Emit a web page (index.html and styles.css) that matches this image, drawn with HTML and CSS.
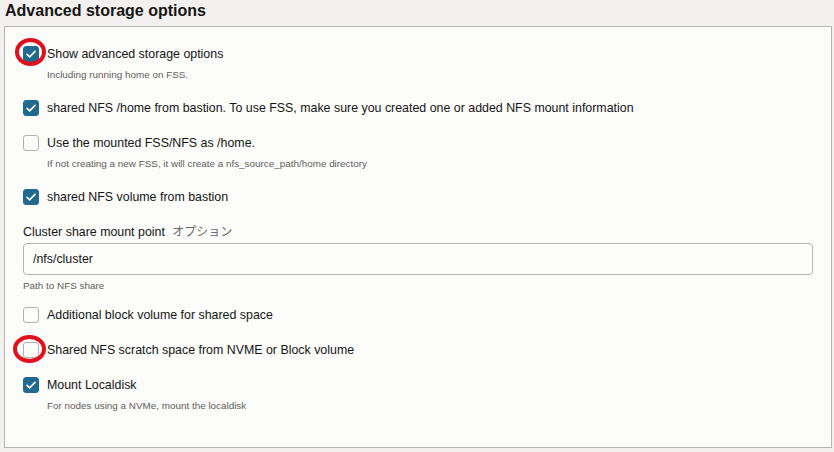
FILE: index.html
```html
<!DOCTYPE html>
<html lang="en">
<head>
<meta charset="utf-8">
<title>Advanced storage options</title>
<link rel="stylesheet" href="styles.css">
</head>
<body>
<h2 class="title">Advanced storage options</h2>
<div class="panel">
  <div class="field has-help">
    <div class="row">
      <span class="cb checked"><svg viewBox="0 0 16 16"><path d="M4 8.3l2.6 2.6L12 5.4"/></svg><span class="mark"></span></span>
      <span class="label">Show advanced storage options</span>
    </div>
    <div class="help">Including running home on FSS.</div>
  </div>
  <div class="field">
    <div class="row">
      <span class="cb checked"><svg viewBox="0 0 16 16"><path d="M4 8.3l2.6 2.6L12 5.4"/></svg></span>
      <span class="label">shared NFS /home from bastion. To use FSS, make sure you created one or added NFS mount information</span>
    </div>
  </div>
  <div class="field has-help">
    <div class="row">
      <span class="cb"></span>
      <span class="label">Use the mounted FSS/NFS as /home.</span>
    </div>
    <div class="help">If not creating a new FSS, it will create a nfs_source_path/home directory</div>
  </div>
  <div class="field before-tf">
    <div class="row">
      <span class="cb checked"><svg viewBox="0 0 16 16"><path d="M4 8.3l2.6 2.6L12 5.4"/></svg></span>
      <span class="label">shared NFS volume from bastion</span>
    </div>
  </div>
  <div class="textfield">
    <div class="tf-label">Cluster share mount point <span class="optional">オプション</span></div>
    <div class="input">/nfs/cluster</div>
    <div class="help help-tf">Path to NFS share</div>
  </div>
  <div class="field">
    <div class="row">
      <span class="cb"></span>
      <span class="label">Additional block volume for shared space</span>
    </div>
  </div>
  <div class="field">
    <div class="row">
      <span class="cb"><span class="mark mark2"></span></span>
      <span class="label">Shared NFS scratch space from NVME or Block volume</span>
    </div>
  </div>
  <div class="field has-help last">
    <div class="row">
      <span class="cb checked"><svg viewBox="0 0 16 16"><path d="M4 8.3l2.6 2.6L12 5.4"/></svg></span>
      <span class="label">Mount Localdisk</span>
    </div>
    <div class="help">For nodes using a NVMe, mount the localdisk</div>
  </div>
</div>
</body>
</html>
```
FILE: styles.css
```css
html, body {
  margin: 0;
  padding: 0;
  background: #f2f1ef;
  font-family: "Liberation Sans", Arial, "Noto Sans CJK JP", sans-serif;
  color: #161513;
}
.title {
  margin: 1px 0 0 5px;
  font-size: 16px;
  line-height: 20px;
  font-weight: bold;
  height: 20px;
}
.panel {
  margin: 5px 0 0 4px;
  width: 828px;
  box-sizing: border-box;
  border: 1px solid #b6b4b0;
  background: #fcfcfb;
  padding: 19px 18px 35px 18px;
  height: 422px;
}
.field {
  margin-bottom: 19px;
}
.field.has-help,
.field.before-tf {
  margin-bottom: 18px;
}
.field.last {
  margin-bottom: 0;
}
.row {
  display: flex;
  align-items: center;
  height: 16px;
}
.cb {
  position: relative;
  width: 16px;
  height: 16px;
  box-sizing: border-box;
  border: 1px solid #b3b1ad;
  border-radius: 3px;
  background: #fcfcfb;
  flex: none;
  margin-right: 8px;
}
.cb.checked {
  background: #216a8d;
  border-color: #216a8d;
}
.cb svg {
  position: absolute;
  left: -1px;
  top: -1px;
  width: 16px;
  height: 16px;
}
.cb svg path {
  fill: none;
  stroke: #fff;
  stroke-width: 1.6;
  stroke-linecap: round;
  stroke-linejoin: round;
}
.mark {
  position: absolute;
  left: -9px;
  top: -9px;
  width: 31px;
  height: 28px;
  box-sizing: border-box;
  border: 4px solid #e1101d;
  border-radius: 50%;
}
.mark2 {
  left: -11px;
  top: -8px;
  width: 33px;
  height: 28px;
}
.label {
  font-size: 12.4px;
  line-height: 16px;
  white-space: nowrap;
}
.help {
  margin: 6px 0 0 24px;
  font-size: 9.9px;
  line-height: 14px;
  color: #5e5c59;
}
.textfield {
  margin-bottom: 14px;
}
.tf-label {
  font-size: 12.4px;
  line-height: 16px;
  margin-bottom: 3px;
}
.optional {
  font-family: "Noto Sans CJK JP", sans-serif;
  font-size: 12px;
  color: #6b6966;
  margin-left: 4px;
}
.input {
  width: 790px;
  height: 32px;
  box-sizing: border-box;
  border: 1px solid #b6b4b0;
  border-radius: 4px;
  background: #fcfcfb;
  padding-left: 9px;
  font-size: 12.4px;
  line-height: 30px;
}
.help-tf {
  margin: 4px 0 0 0;
}
```
